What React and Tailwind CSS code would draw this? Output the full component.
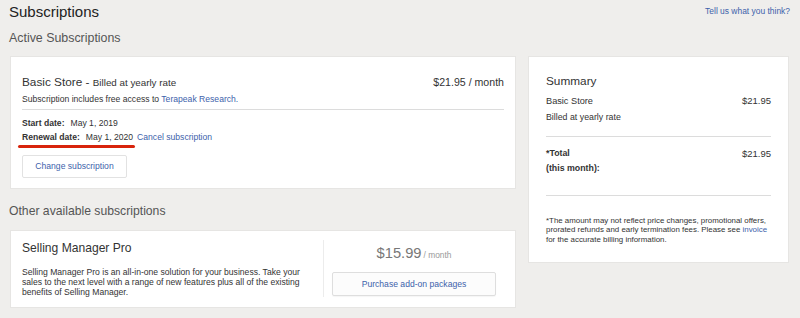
import React from 'react'

const link = 'text-[#3d62ab]'

function Row({ left, right, bold }) {
  return (
    <div className={`flex justify-between ${bold ? 'font-bold' : ''}`}>
      <span>{left}</span>
      {right && <span className="text-[9.5px]">{right}</span>}
    </div>
  )
}

function ActiveCard() {
  return (
    <div className="bg-white border border-[#e6e5e3] px-[11px] pt-[16px] pb-[10px] text-[#333]">
      <div className="flex justify-between items-baseline leading-[16px]">
        <div>
          <span className="text-[11.8px]">Basic Store - </span>
          <span className="text-[9.8px]">Billed at yearly rate</span>
        </div>
        <span className="text-[10.6px]">$21.95 / month</span>
      </div>
      <div className="mt-[1px] text-[8.6px] leading-[14px] pb-[3px] border-b border-[#dcdcdc]">
        Subscription includes free access to <a className={link}>Terapeak Research.</a>
      </div>
      <div className="mt-[6px] text-[8.6px] leading-[14px]">
        <div>
          <span className="font-bold">Start date:</span>
          <span className="ml-[6px]">May 1, 2019</span>
        </div>
        <div>
          <span className="relative">
            <span className="font-bold">Renewal date:</span>
            <span className="ml-[6px]">May 1, 2020</span>
            <span className="absolute -left-[4px] -right-[2px] top-[13px] h-[2.5px] rounded-full bg-[#d8240c]" />
          </span>
          <a className={`${link} ml-[4px]`}>Cancel subscription</a>
        </div>
      </div>
      <button className={`mt-[11px] w-[105px] h-[23px] border border-[#e2e2e2] rounded-[2px] text-[8.6px] ${link}`}>
        Change subscription
      </button>
    </div>
  )
}

function OtherCard() {
  return (
    <div className="bg-white border border-[#e6e5e3] px-[11px] pt-[9px] pb-[10px] flex text-[#333]">
      <div className="w-[302px] pr-[10px] border-r border-[#ececec]">
        <div className="text-[12.1px] leading-[16px]">Selling Manager Pro</div>
        <p className="mt-[11px] text-[8.6px] leading-[10px]">
          Selling Manager Pro is an all-in-one solution for your business. Take your sales to the next level with a range of new features plus all of the existing benefits of Selling Manager.
        </p>
      </div>
      <div className="flex-1 flex flex-col items-center pt-[4px] px-[8px]">
        <div className="leading-[18px] text-[#777]">
          <span className="text-[14.7px]">$15.99</span>
          <span className="text-[8.4px] ml-[2px] text-[#999]">/ month</span>
        </div>
        <button className={`mt-[8px] w-full h-[24px] border border-[#dedede] rounded-[2px] bg-[#fcfcfc] shadow-[0_1px_1px_rgba(0,0,0,0.04)] text-[8.6px] ${link}`}>
          Purchase add-on packages
        </button>
      </div>
    </div>
  )
}

function Summary() {
  return (
    <div className="w-[261px] bg-white border border-[#e6e5e3] px-[17px] pt-[15px] pb-[18px] text-[#333] self-start">
      <div className="text-[11.8px] leading-[18px]">Summary</div>
      <div className="mt-[3px] text-[8.8px] leading-[16px] pb-[11px] border-b border-[#dcdcdc]">
        <Row left={<span className="text-[9.2px]">Basic Store</span>} right="$21.95" />
        <div>Billed at yearly rate</div>
      </div>
      <div className="mt-[9px] text-[8.8px] leading-[15px] pb-[19px] border-b border-[#dcdcdc]">
        <Row left="*Total" right={<span className="font-normal">$21.95</span>} bold />
        <div className="font-bold">(this month):</div>
      </div>
      <p className="mt-[20px] -mr-[6px] text-[7.9px] leading-[9.4px]">
        *The amount may not reflect price changes, promotional offers, prorated refunds and early termination fees. Please see <a className={link}>invoice</a> for the accurate billing information.
      </p>
    </div>
  )
}

export default function App() {
  return (
    <div className="w-[800px] h-[318px] bg-[#efeeec] overflow-hidden" style={{ fontFamily: '"Liberation Sans", Arial, sans-serif' }}>
      <div className="flex justify-between items-start px-[9px] pt-[3px]">
        <h1 className="text-[15px] leading-[18px] text-[#222]">Subscriptions</h1>
        <a className={`${link} text-[8.45px] leading-[16px] mr-[1px]`}>Tell us what you think?</a>
      </div>
      <h2 className="px-[9px] mt-[9px] text-[12.4px] leading-[16px] font-light text-[#555]">Active Subscriptions</h2>
      <div className="flex gap-[12px] pl-[10px] mt-[10px]">
        <div className="w-[506px]">
          <ActiveCard />
          <h2 className="-ml-[1px] mt-[14px] text-[12.2px] leading-[16px] font-light text-[#555]">Other available subscriptions</h2>
          <div className="mt-[11px]">
            <OtherCard />
          </div>
        </div>
        <Summary />
      </div>
    </div>
  )
}
